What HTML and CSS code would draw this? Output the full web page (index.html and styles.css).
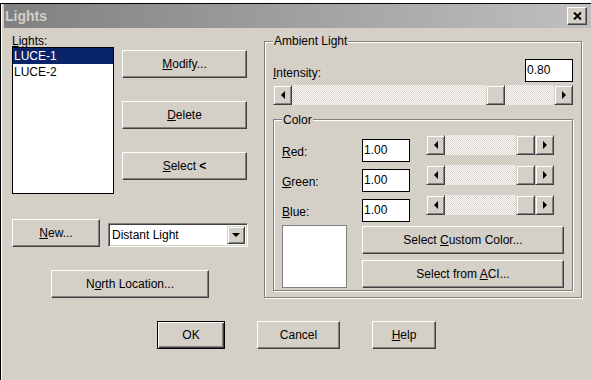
FILE: index.html
```html
<!DOCTYPE html>
<html lang="en">
<head>
    <meta charset="utf-8">
    <title>Lights</title>
    <link rel="stylesheet" href="styles.css">
</head>
<body>
    <div class="window">
        <div class="titlebar">
            <span class="title">Lights</span>
            <button class="close">
                <svg width="9" height="8" viewBox="0 0 9 8"><path d="M1 0.5 L8 7.5 M8 0.5 L1 7.5" stroke="#000" stroke-width="2"/></svg>
            </button>
        </div>
        <div class="main">
            <div class="left-col">
                <div class="list-area">
                    <div class="list-col">
                        <div class="label list-label"><u>L</u>ights:</div>
                        <div class="listbox">
                            <div class="item selected">LUCE-1</div>
                            <div class="item">LUCE-2</div>
                        </div>
                    </div>
                    <div class="btn-col">
                        <button class="btn btn-side"><u>M</u>odify...</button>
                        <button class="btn btn-side"><u>D</u>elete</button>
                        <button class="btn btn-side"><u>S</u>elect <b>&lt;</b></button>
                    </div>
                </div>
                <div class="new-row">
                    <button class="btn btn-new"><u>N</u>ew...</button>
                    <div class="dropdown">
                        <span class="dropdown-text">Distant Light</span>
                        <span class="dropdown-btn"><span class="arr-down"></span></span>
                    </div>
                </div>
                <button class="btn btn-north">N<u>o</u>rth Location...</button>
            </div>
            <div class="group ambient">
                <span class="legend">Ambient Light</span>
                <div class="intensity-row">
                    <span class="label intensity-label"><u>I</u>ntensity:</span>
                    <div class="field">0.80</div>
                </div>
                <div class="hscroll">
                    <span class="sb-btn"><span class="arr-left"></span></span>
                    <span class="track track-80"></span>
                    <span class="sb-btn"></span>
                    <span class="track track-rest"></span>
                    <span class="sb-btn"><span class="arr-right"></span></span>
                </div>
                <div class="group color-group">
                    <span class="legend">Color</span>
                    <div class="color-row">
                        <span class="label color-label"><u>R</u>ed:</span>
                        <div class="field">1.00</div>
                        <div class="hscroll small">
                            <span class="sb-btn"><span class="arr-left"></span></span>
                            <span class="track track-rest"></span>
                            <span class="sb-btn"></span>
                            <span class="sb-btn"><span class="arr-right"></span></span>
                        </div>
                    </div>
                    <div class="color-row">
                        <span class="label color-label"><u>G</u>reen:</span>
                        <div class="field">1.00</div>
                        <div class="hscroll small">
                            <span class="sb-btn"><span class="arr-left"></span></span>
                            <span class="track track-rest"></span>
                            <span class="sb-btn"></span>
                            <span class="sb-btn"><span class="arr-right"></span></span>
                        </div>
                    </div>
                    <div class="color-row">
                        <span class="label color-label"><u>B</u>lue:</span>
                        <div class="field">1.00</div>
                        <div class="hscroll small">
                            <span class="sb-btn"><span class="arr-left"></span></span>
                            <span class="track track-rest"></span>
                            <span class="sb-btn"></span>
                            <span class="sb-btn"><span class="arr-right"></span></span>
                        </div>
                    </div>
                    <div class="color-bottom">
                        <div class="swatch"></div>
                        <div class="color-btns">
                            <button class="btn btn-color">Select <u>C</u>ustom Color...</button>
                            <button class="btn btn-color">Select from <u>A</u>CI...</button>
                        </div>
                    </div>
                </div>
            </div>
        </div>
        <div class="actions">
            <button class="btn btn-default btn-ok">OK</button>
            <button class="btn btn-cancel">Cancel</button>
            <button class="btn btn-help"><u>H</u>elp</button>
        </div>
    </div>
</body>
</html>
```

FILE: styles.css
```css
body{
    margin: 0;
    background-color: #fff;
    font-family: "Liberation Sans", Arial, sans-serif;
    font-size: 12px;
    color: #000;
}
.window{
    margin-top: 3px;
    height: 377px;
    box-sizing: border-box;
    background-color: #d4d0c8;
    border-top: 1px solid #000;
    border-left: 1px solid #000;
    box-shadow: inset 1px 0 0 #fff;
    overflow: hidden;
}
.titlebar{
    display: flex;
    align-items: center;
    justify-content: space-between;
    height: 24px;
    margin-left: 3px;
    padding: 0 4px 0 1px;
    background: linear-gradient(to right, #808080, #c0c0c0);
}
.title{
    font-weight: bold;
    font-size: 14px;
    color: #d4d0c8;
}
.close{
    display: flex;
    align-items: center;
    justify-content: center;
    width: 20px;
    height: 18px;
    padding: 0;
    background-color: #d4d0c8;
    border: 1px solid;
    border-color: #fff #404040 #404040 #fff;
    box-shadow: inset -1px -1px 0 #808080;
}
.btn{
    height: 28px;
    box-sizing: border-box;
    padding: 0;
    font-family: inherit;
    font-size: 12px;
    color: #000;
    background-color: #d4d0c8;
    border: 1px solid;
    border-color: #fff #404040 #404040 #fff;
    box-shadow: inset -1px -1px 0 #808080;
}
.btn-default{
    border: 1px solid #000;
    box-shadow: inset 1px 1px 0 #fff, inset -1px -1px 0 #404040, inset -2px -2px 0 #808080;
}
.label{
    line-height: 14px;
    height: 14px;
}
.main{
    display: flex;
    gap: 16px;
    padding-left: 11px;
}
.left-col{
    width: 236px;
    display: flex;
    flex-direction: column;
}
.list-area{
    display: flex;
    gap: 8px;
}
.list-col{
    width: 102px;
    padding-top: 6px;
}
.list-label{
    height: 12px;
}
.listbox{
    margin-top: 1px;
    height: 147px;
    box-sizing: border-box;
    background-color: #fff;
    border: 1px solid #000;
}
.item{
    height: 16px;
    line-height: 17px;
    padding-left: 1px;
}
.selected{
    background-color: #0a246a;
    color: #fff;
}
.btn-col{
    display: flex;
    flex-direction: column;
    gap: 23px;
    padding-top: 22px;
}
.btn-side{
    width: 125px;
}
.new-row{
    display: flex;
    gap: 8px;
    margin-top: 25px;
}
.btn-new{
    width: 88px;
}
.dropdown{
    display: flex;
    align-items: stretch;
    margin-top: 4px;
    width: 140px;
    height: 24px;
    box-sizing: border-box;
    padding: 2px;
    background-color: #fff;
    border: 1px solid;
    border-color: #808080 #fff #fff #808080;
    box-shadow: inset 1px 1px 0 #404040, inset -1px -1px 0 #d4d0c8;
}
.dropdown-text{
    flex: 1;
    padding-left: 1px;
    line-height: 19px;
}
.dropdown-btn{
    display: flex;
    align-items: center;
    justify-content: center;
    width: 18px;
    box-sizing: border-box;
    background-color: #d4d0c8;
    border: 1px solid;
    border-color: #d4d0c8 #404040 #404040 #d4d0c8;
    box-shadow: inset 1px 1px 0 #fff, inset -1px -1px 0 #808080;
}
.arr-down{
    width: 0;
    height: 0;
    border-left: 4px solid transparent;
    border-right: 4px solid transparent;
    border-top: 4px solid #000;
}
.arr-left{
    width: 0;
    height: 0;
    border-top: 4px solid transparent;
    border-bottom: 4px solid transparent;
    border-right: 4px solid #000;
}
.arr-right{
    width: 0;
    height: 0;
    border-top: 4px solid transparent;
    border-bottom: 4px solid transparent;
    border-left: 4px solid #000;
}
.btn-north{
    margin-top: 23px;
    margin-left: 39px;
    width: 158px;
}
.group{
    position: relative;
    box-sizing: border-box;
    border: 1px solid #808080;
    box-shadow: inset 1px 1px 0 #fff, 1px 1px 0 #fff;
}
.legend{
    position: absolute;
    top: -8px;
    left: 8px;
    padding: 0 1px;
    line-height: 14px;
    background-color: #d4d0c8;
}
.ambient{
    margin-top: 13px;
    width: 318px;
    height: 257px;
    padding: 0 8px;
}
.intensity-row{
    display: flex;
    justify-content: space-between;
    align-items: flex-start;
    margin-top: 17px;
}
.intensity-label{
    margin-top: 7px;
}
.field{
    width: 48px;
    height: 23px;
    box-sizing: border-box;
    padding-left: 1px;
    line-height: 21px;
    background-color: #fff;
    border: 1px solid #000;
}
.hscroll{
    display: flex;
    height: 20px;
    margin-top: 3px;
}
.sb-btn{
    display: flex;
    align-items: center;
    justify-content: center;
    width: 19px;
    height: 20px;
    box-sizing: border-box;
    background-color: #d4d0c8;
    border: 1px solid;
    border-color: #d4d0c8 #404040 #404040 #d4d0c8;
    box-shadow: inset 1px 1px 0 #fff, inset -1px -1px 0 #808080;
}
.track{
    background: repeating-conic-gradient(#fff 0 25%, #d4d0c8 0 50%) 0 0 / 2px 2px;
}
.track-80{
    width: 194px;
}
.track-rest{
    flex: 1;
}
.color-group{
    margin-top: 14px;
    width: 300px;
    height: 172px;
    padding: 15px 0 0 8px;
}
.color-group .legend{
    top: -7px;
}
.color-row{
    display: flex;
    align-items: flex-start;
    height: 30px;
}
.color-label{
    width: 80px;
    margin-top: 10px;
}
.color-row .field{
    margin-top: 4px;
}
.small{
    width: 128px;
    margin-top: 0;
    margin-left: 16px;
}
.color-bottom{
    display: flex;
    gap: 15px;
}
.swatch{
    width: 65px;
    height: 63px;
    box-sizing: border-box;
    background-color: #fff;
    border: 1px solid #808080;
}
.color-btns{
    display: flex;
    flex-direction: column;
    gap: 6px;
    margin-top: 1px;
}
.btn-color{
    width: 202px;
}
.actions{
    display: flex;
    gap: 32px;
    padding-left: 156px;
    margin-top: 23px;
}
.btn-ok{
    width: 68px;
}
.btn-cancel{
    width: 83px;
}
.btn-help{
    width: 64px;
}
```
